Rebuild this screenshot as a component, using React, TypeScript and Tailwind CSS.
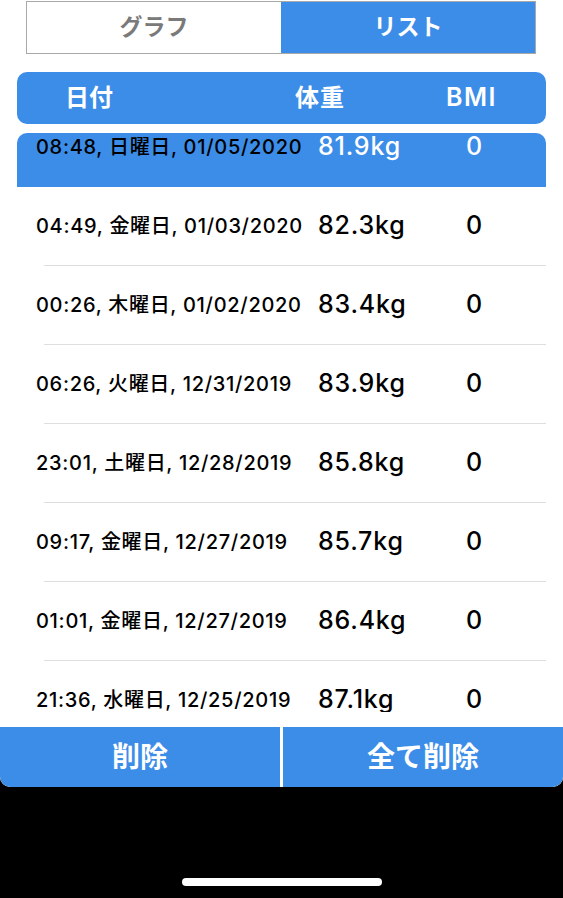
const rows = [
  { date: "08:48, 日曜日, 01/05/2020", weight: "81.9kg", bmi: "0", selected: true },
  { date: "04:49, 金曜日, 01/03/2020", weight: "82.3kg", bmi: "0" },
  { date: "00:26, 木曜日, 01/02/2020", weight: "83.4kg", bmi: "0" },
  { date: "06:26, 火曜日, 12/31/2019", weight: "83.9kg", bmi: "0" },
  { date: "23:01, 土曜日, 12/28/2019", weight: "85.8kg", bmi: "0" },
  { date: "09:17, 金曜日, 12/27/2019", weight: "85.7kg", bmi: "0" },
  { date: "01:01, 金曜日, 12/27/2019", weight: "86.4kg", bmi: "0" },
  { date: "21:36, 水曜日, 12/25/2019", weight: "87.1kg", bmi: "0" },
];

export default function App() {
  return (
    <div className="w-[563px] h-[898px] bg-black flex flex-col font-[Inter,'Noto_Sans_CJK_JP',sans-serif]">
      <div className="bg-white h-[787px] rounded-b-[10px] overflow-hidden flex flex-col">
        {/* segment */}
        <div className="mt-[1px] ml-[26px] w-[510px] h-[53px] flex border border-[#a9a9a9]">
          <div className="flex-1 flex items-center justify-center text-[23px] font-semibold text-[#7a7a7a]">
            グラフ
          </div>
          <div className="flex-1 flex items-center justify-center text-[23px] font-semibold text-white bg-[#3c8de8]">
            リスト
          </div>
        </div>

        {/* header */}
        <div className="mt-[18px] ml-[17px] w-[529px] h-[52px] rounded-[10px] bg-[#3c8de8] flex items-center text-white text-[24px] font-semibold">
          <div className="w-[278px] pl-[48px]">日付</div>
          <div className="w-[151px] tracking-[1px]">体重</div>
          <div className="tracking-[1.5px] text-[25px]">BMI</div>
        </div>

        {/* list */}
        <div className="mt-[9px] ml-[17px] w-[529px] h-[579px] rounded-t-[10px] overflow-hidden">
          <div className="-mt-[25px]">
            {rows.map((r, i) => (
              <div key={i} className={r.selected ? "bg-[#3c8de8]" : "bg-white"}>
                <div className="h-[78px] flex items-center">
                  <div className="w-[301px] pl-[19px] text-[20px] font-medium text-black tracking-[0.7px]">
                    {r.date}
                  </div>
                  <div
                    className={`w-[126px] text-[25px] font-medium tracking-[0.8px] ${
                      r.selected ? "text-white" : "text-black"
                    }`}
                  >
                    {r.weight}
                  </div>
                  <div
                    className={`w-[60px] text-center text-[25px] font-medium ${
                      r.selected ? "text-white" : "text-black"
                    }`}
                  >
                    {r.bmi}
                  </div>
                </div>
                <div className={`ml-[27px] h-px ${r.selected ? "bg-[#3c8de8]" : "bg-[#dedede]"}`} />
              </div>
            ))}
          </div>
        </div>

        <div className="flex-1" />

        {/* bottom buttons */}
        <div className="h-[60px] flex gap-[3px] text-white text-[28px] font-semibold">
          <div className="w-[280px] bg-[#3c8de8] rounded-bl-[10px] flex items-center justify-center">削除</div>
          <div className="flex-1 bg-[#3c8de8] rounded-br-[10px] flex items-center justify-center">全て削除</div>
        </div>
      </div>

      <div className="flex-1 flex items-end justify-center pb-[12px]">
        <div className="w-[200px] h-[8px] rounded-full bg-white" />
      </div>
    </div>
  );
}
